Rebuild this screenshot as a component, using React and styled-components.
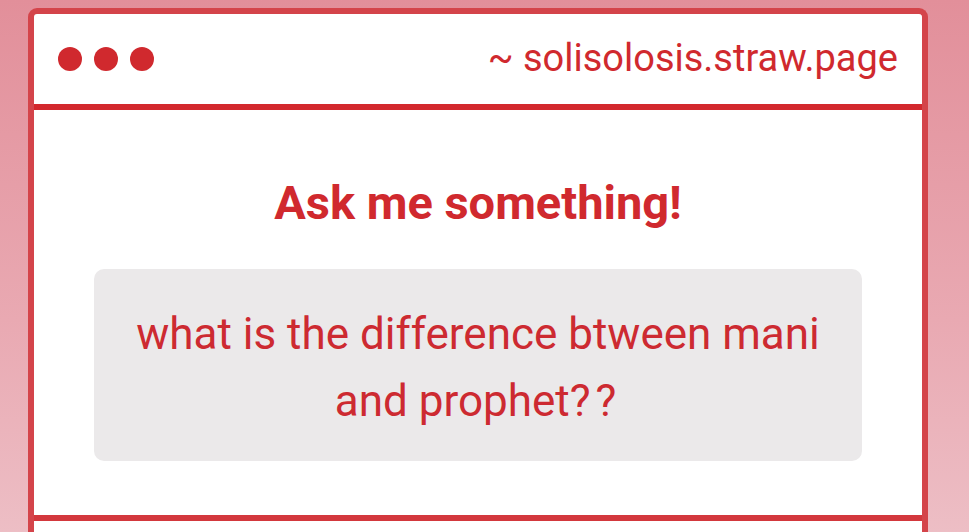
import React from 'react'
import styled, { createGlobalStyle } from 'styled-components'

const GlobalStyle = createGlobalStyle`
  html, body {
    margin: 0;
    padding: 0;
  }
  body {
    height: 532px;
    overflow: hidden;
    background: linear-gradient(180deg, #e28f9a 0%, #e9a9b2 60%, #edbec5 100%);
    font-family: Roboto, 'Liberation Sans', sans-serif;
  }
`

const red = '#d0292e'

const Page = styled.div`
  padding: 8px 41px 0 28px;
`

const Window = styled.div`
  width: 900px;
  box-sizing: border-box;
  background: #fff;
  border: 6px solid #d4444a;
  border-bottom: none;
  border-radius: 9px 9px 0 0;
  display: flex;
  flex-direction: column;
`

const TitleBar = styled.div`
  height: 90px;
  display: flex;
  align-items: center;
  justify-content: space-between;
  padding: 0 24px;
  border-bottom: 6px solid #d3282d;
`

const Dots = styled.div`
  display: flex;
  gap: 12px;
`

const Dot = styled.span`
  width: 24px;
  height: 24px;
  border-radius: 50%;
  background: ${red};
`

const Url = styled.div`
  color: ${red};
  font-size: 38px;
  line-height: 44px;
  padding-bottom: 2px;
`

const Body = styled.div`
  height: 411px;
  box-sizing: border-box;
  padding: 64px 60px 0;
  border-bottom: 6px solid #d3383d;
  display: flex;
  flex-direction: column;
  align-items: center;
`

const Heading = styled.h1`
  margin: 0;
  color: ${red};
  font-size: 47px;
  font-weight: 700;
  line-height: 58px;
`

const QuestionBox = styled.div`
  margin-top: 37px;
  align-self: stretch;
  height: 192px;
  box-sizing: border-box;
  background: #ebe9ea;
  border-radius: 10px;
  display: flex;
  align-items: center;
  justify-content: center;
  padding: 6px 30px 0;
  text-align: center;
  color: #cd2a31;
  font-size: 44px;
  line-height: 67px;
`

const Marks = styled.span`
  letter-spacing: 5px;
`

const Footer = styled.div`
  height: 40px;
`

export default function App() {
  return (
    <>
      <GlobalStyle />
      <Page>
        <Window>
          <TitleBar>
            <Dots>
              <Dot />
              <Dot />
              <Dot />
            </Dots>
            <Url>~ solisolosis.straw.page</Url>
          </TitleBar>
          <Body>
            <Heading>Ask me something!</Heading>
            <QuestionBox>
              <div>
                what is the difference btween mani
                <br />
                and prophet<Marks>??</Marks>
              </div>
            </QuestionBox>
          </Body>
          <Footer />
        </Window>
      </Page>
    </>
  )
}
